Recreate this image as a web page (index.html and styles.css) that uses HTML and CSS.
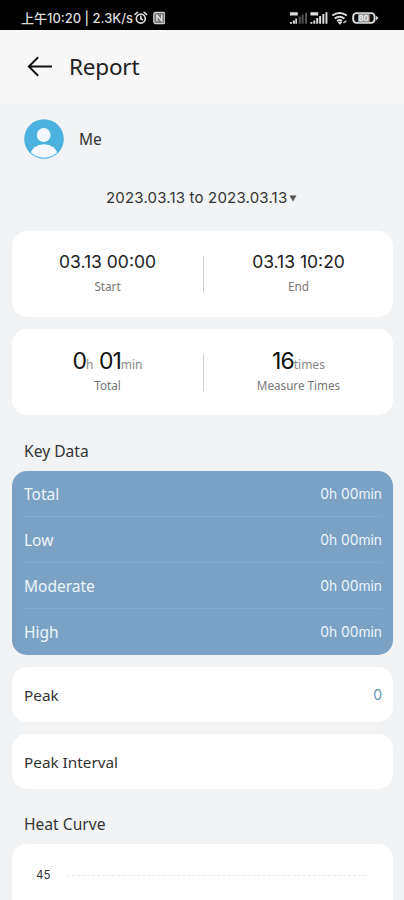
FILE: index.html
```html
<!DOCTYPE html>
<html lang="en">
<head>
<meta charset="utf-8">
<meta name="viewport" content="width=device-width, initial-scale=1">
<title>Report</title>
<link rel="stylesheet" href="styles.css">
</head>
<body>
<div class="screen">
  <div class="status">
    <span class="status-text">上午10:20 | 2.3K/s</span>
    <svg class="alarm" width="14" height="14" viewBox="0 0 14 14"><g fill="none" stroke="#d8d8d8" stroke-width="1.7" stroke-linecap="round"><circle cx="7" cy="7.6" r="4.6"/><path d="M1 3.4 3.5 1.2M13 3.4 10.500 1.200M7 5.200v2.600l1.700 1"/></g></svg>
    <svg class="nfc" width="13" height="14" viewBox="0 0 13 14"><rect x=".8" y="1.200" width="11.400" height="11.600" rx="2" fill="#777" stroke="#d0d0d0" stroke-width="1.300"/><path d="M4 10.500V4l5 6V3.500" fill="none" stroke="#e4e4e4" stroke-width="1.400"/></svg>
    <svg class="signals" width="118" height="14" viewBox="0 0 118 14">
      <g fill="#ddd"><path d="M1 1h8v3.500H1zM1 11h2v2H1zM4 9.500h2V13H4zM6.500 7.500h1.700V13H6.500z"/><path fill="#555" d="M10 5.500h2V13h-2zM13 3.500h2V13h-2zM16.500 1.500h2V13h-2z"/>
      <path d="M22 1h8v3.500h-8zM22 11h2v2h-2zM25 9.500h2V13h-2zM28 7h2v6h-2zM31 5h2v8h-2zM34.300 3h2v10h-2zM37.500 1h2v12h-2z"/></g>
      <g fill="none" stroke="#ddd" stroke-width="2"><path d="M44.500 4.500q7.500-5.500 15 0M47 7.500q5-3.700 10 0M49.500 10q2.500-1.800 5 0"/><path d="m51 11 1.300 1.500L54 11"/></g><path d="m56 12 3-2" stroke="#ccc" stroke-width="1.500"/>
      <rect x="66" y="2" width="22" height="10" rx="3.500" fill="#111" stroke="#ddd" stroke-width="2"/><rect x="71" y="2.500" width="12" height="9" fill="#999"/><path d="M89.500 4.500 92 7l-2.500 2.500z" fill="#ddd"/>
      <text x="71.500" y="10" class="battery-text">80</text>
    </svg>
  </div>
  <header class="header">
    <svg class="back" width="26" height="22" viewBox="0 0 26 22"><path d="M25 10.500H2M11.200 1.200 1.800 10.500l9.400 9.200" fill="none" stroke="#111" stroke-width="1.900"/></svg>
    <h1 class="title">Report</h1>
  </header>
  <div class="user">
    <svg width="40" height="40" viewBox="0 0 40 40"><defs><clipPath id="face"><circle cx="20" cy="20" r="18.800"/></clipPath></defs><circle cx="20" cy="20" r="19.800" fill="#4bb1df"/><g fill="#f1f9fe" clip-path="url(#face)"><circle cx="19.700" cy="16" r="6.900"/><ellipse cx="20" cy="35" rx="13.200" ry="9.700"/></g></svg>
    <span class="user-name">Me</span>
  </div>
  <div class="range"><span class="range-text">2023.03.13 to 2023.03.13</span><svg width="8" height="7" viewBox="0 0 8 7"><path d="M.5.500h7L4 6.500z" fill="#555"/></svg></div>
  <section class="card pair">
    <div class="cell"><div class="stamp">03.13 00:00</div><div class="caption">Start</div></div>
    <div class="rule"></div>
    <div class="cell"><div class="stamp">03.13 10:20</div><div class="caption">End</div></div>
  </section>
  <section class="card pair">
    <div class="cell"><div class="figure">0<small>h</small> 01<small>min</small></div><div class="caption">Total</div></div>
    <div class="rule"></div>
    <div class="cell"><div class="figure">16<small>times</small></div><div class="caption">Measure Times</div></div>
  </section>
  <h2 class="heading">Key Data</h2>
  <section class="levels">
    <div class="level"><span>Total</span><span class="value">0h 00min</span></div>
    <div class="level"><span>Low</span><span class="value">0h 00min</span></div>
    <div class="level"><span>Moderate</span><span class="value">0h 00min</span></div>
    <div class="level"><span>High</span><span class="value">0h 00min</span></div>
  </section>
  <section class="card line"><span>Peak</span><span class="peak">0</span></section>
  <section class="card line"><span>Peak Interval</span></section>
  <h2 class="heading curve-heading">Heat Curve</h2>
  <section class="card chart"><span class="tick">45</span><span class="gridline"></span></section>
</div>
</body>
</html>
```
FILE: styles.css
```css
* { box-sizing: border-box; }
body { margin: 0; background: #f1f3f5; font-family: "Noto Sans", "Noto Sans CJK SC", sans-serif; color: #333; }
.screen { height: 900px; overflow: hidden; display: flex; flex-direction: column; }
.screen > * { flex-shrink: 0; }
.status { height: 30px; background: #000; display: flex; align-items: center; padding: 6px 0 0 21px; }
.status-text { width: 112px; white-space: nowrap; font: 500 13px/20px Inter, "Noto Sans CJK SC", sans-serif; letter-spacing: 0; color: #ddd; }
.alarm { margin-left: 1px; }
.nfc { margin-left: 5px; }
.signals { margin-left: 124px; }
.battery-text { font: 700 8px Inter, sans-serif; fill: #eee; }
.header { height: 74px; background: #f7f7f7; display: flex; align-items: center; padding-left: 27px; }
.title { margin: 0 0 0 16px; font-size: 22.5px; line-height: 30px; font-weight: 400; letter-spacing: -.2px; color: #222; }
.user { height: 69px; display: flex; align-items: center; padding-left: 24px; gap: 15px; }
.user-name { font-size: 15.5px; }
.range { height: 58px; padding: 13px 0 0 106px; display: flex; align-items: flex-start; gap: 1px; }
.range-text { width: 182px; font: 400 15px/24px Inter, sans-serif; letter-spacing: .18px; white-space: nowrap; }
.range svg { margin-top: 9px; }
.card { margin: 0 11px 12px 12px; background: #fff; border-radius: 15px; }
.pair { height: 86px; display: grid; grid-template-columns: 191px 1px 1fr; align-items: center; }
.cell { text-align: center; padding-bottom: 1px; }
.stamp { font: 400 17.5px/24px Inter, sans-serif; padding-bottom: 2px; margin-top: -1px; color: #222; }
.caption { font-size: 11.7px; line-height: 20px; color: #777; }
.figure { font: 400 23px/27px Inter, sans-serif; letter-spacing: -1px; color: #111; }
.figure small { font: 400 12px "Noto Sans", sans-serif; letter-spacing: 0; color: #888; }
.rule { height: 37px; background: #ccc; }
.heading { margin: 12px 0 8px 24px; font-size: 15.6px; line-height: 24px; font-weight: 400; color: #333; }
.levels { height: 184px; margin: 0 11px 12px 12px; padding: 0 11px 0 12px; border-radius: 15px; background: #7ba2c4; color: #edf4fa; font-size: 15.5px; }
.level { height: 46px; display: flex; align-items: center; justify-content: space-between; border-bottom: 1px solid #84abc9; }
.level:last-child { border-bottom: 0; }
.value { font: 400 13.8px Inter, sans-serif; }
.line { height: 55px; padding: 0 11px 0 12px; display: flex; align-items: center; justify-content: space-between; font-size: 15.3px; }
.peak { font: 400 14px Inter, sans-serif; color: #6691b0; }
.curve-heading { margin: 11px 0 8px 24px; }
.chart { height: 80px; padding: 20px 27px 0 24px; display: flex; align-items: flex-start; gap: 17px; }
.tick { font: 400 11.5px/22px Inter, sans-serif; }
.gridline { flex: 1; margin-top: 11px; border-top: 1px dashed #ececec; }
```
